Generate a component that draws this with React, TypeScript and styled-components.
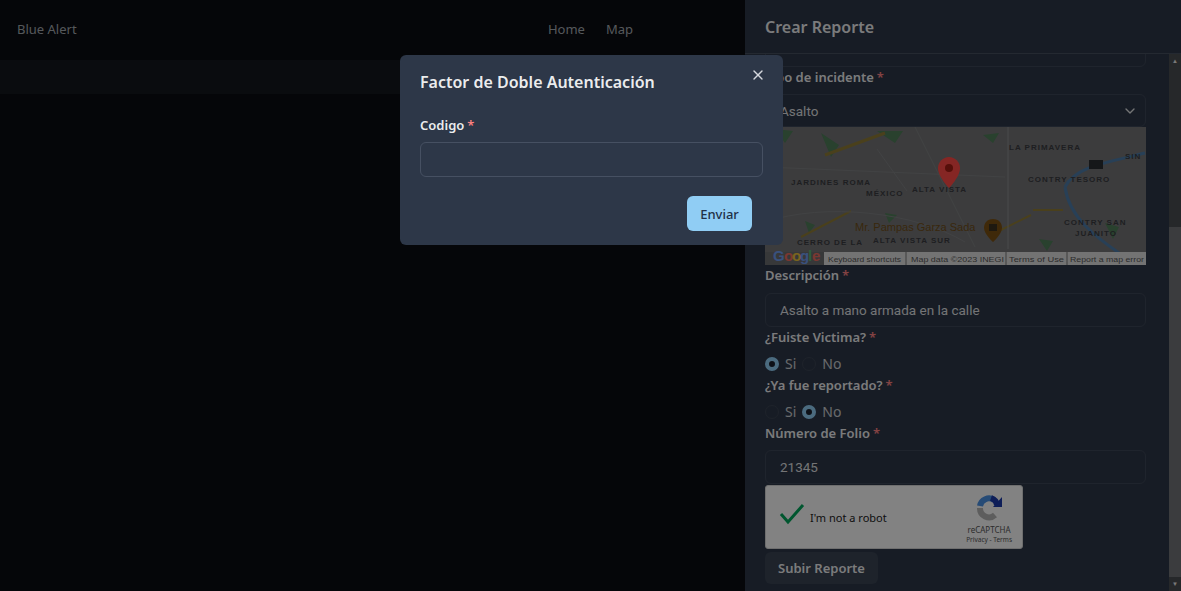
import React from 'react';
import styled, { createGlobalStyle } from 'styled-components';
import { X, ChevronDown } from 'lucide-react';

const GlobalStyle = createGlobalStyle`
  html, body {
    margin: 0;
    height: 100%;
    overflow: hidden;
    background: #0a0c12;
    font-family: "Noto Sans", "Open Sans", sans-serif;
  }
`;

const Screen = styled.div`
  position: relative;
  width: 1181px;
  height: 591px;
  overflow: hidden;
`;

const Page = styled.div`
  display: flex;
  flex-direction: column;
  height: 100%;
`;

const Nav = styled.nav`
  height: 60px;
  flex: none;
  box-sizing: border-box;
  display: grid;
  grid-template-columns: 1fr auto 1fr;
  align-items: center;
  padding: 0 17px 3px;
  color: #a4a9af;
  font-size: 13px;
`;

const NavLinks = styled.div`
  display: flex;
  gap: 21px;
`;

const Strip = styled.div`
  height: 34px;
  flex: none;
  background: #15171d;
`;

const Dim = styled.div`
  position: absolute;
  inset: 0;
  background: rgba(0, 0, 0, 0.48);
  z-index: 3;
`;

const Drawer = styled.aside`
  position: absolute;
  top: 0;
  right: 0;
  bottom: 0;
  z-index: 2;
  width: 436px;
  display: flex;
  flex-direction: column;
  background: #2d3748;
  color: rgba(255, 255, 255, 0.92);
`;

const DrawerTitle = styled.header`
  height: 54px;
  display: flex;
  align-items: center;
  padding: 0 20px;
  font-size: 16px;
  font-weight: 600;
  box-sizing: border-box;
  border-bottom: 1px solid #46505f;
  flex: none;
`;

const DrawerBody = styled.div`
  flex: 1;
  min-height: 0;
  display: flex;
  overflow: hidden;
`;

const Form = styled.form`
  flex: 1;
  min-width: 0;
  display: flex;
  flex-direction: column;
  padding: 0 23px 0 20px;
  margin-top: -21px;
`;

const Label = styled.label<{ $gap?: number }>`
  display: block;
  height: 20px;
  line-height: 20px;
  font-size: 13px;
  font-weight: 600;
  margin-bottom: ${(p) => p.$gap ?? 7}px;
`;

const Required = styled.span`
  color: #fc8181;
  margin-left: 3px;
`;

const Field = styled.div`
  height: 34px;
  flex: none;
  box-sizing: border-box;
  display: flex;
  align-items: center;
  padding: 0 14px;
  border: 1px solid #3d4656;
  border-radius: 6px;
  font-family: Roboto, sans-serif;
  font-size: 13.5px;
  color: rgba(255, 255, 255, 0.85);
`;

const SelectField = styled(Field)`
  height: 33px;
  justify-content: space-between;
  padding-right: 7px;
`;

const RadioRow = styled.div`
  display: flex;
  align-items: center;
  height: 23px;
  font-size: 14px;
`;

const RadioOption = styled.span`
  display: flex;
  align-items: center;
  gap: 6px;
  margin-right: 6px;
  color: rgba(255, 255, 255, 0.75);
`;

const RadioDot = styled.span<{ $checked?: boolean }>`
  width: 14px;
  height: 14px;
  box-sizing: border-box;
  border-radius: 50%;
  border: ${(p) => (p.$checked ? '4px solid #90cdf4' : '1px solid #3a4352')};
  background: ${(p) => (p.$checked ? '#1a202c' : 'transparent')};
`;

const MapFrame = styled.div`
  height: 138px;
  flex: none;
  overflow: hidden;
`;

const Captcha = styled.div`
  width: 258px;
  height: 64px;
  flex: none;
  margin-top: 1px;
  box-sizing: border-box;
  border-radius: 3px;
  background: #f9f9f9;
  border: 1px solid #d3d3d3;
  display: flex;
  align-items: center;
  padding: 0 10px 0 13px;
  color: #222;
`;

const CheckBox = styled.span`
  display: flex;
  margin-bottom: 6px;
`;

const CaptchaText = styled.span`
  flex: 1;
  font-size: 11px;
  margin-left: 5px;
`;

const CaptchaBrand = styled.div`
  display: flex;
  flex-direction: column;
  align-items: center;
  gap: 0;
  padding-top: 5px;
  font-size: 8px;
  line-height: 10px;
  color: #555;

  svg {
    margin-bottom: 3px;
  }
`;

const CaptchaLegal = styled.span`
  font-size: 6.5px;
`;

const SubmitButton = styled.button`
  flex: none;
  width: 113px;
  height: 32px;
  margin-top: 3px;
  border: none;
  border-radius: 6px;
  background: #3a4454;
  color: rgba(255, 255, 255, 0.92);
  font: 600 13px "Noto Sans", sans-serif;
`;

const Scrollbar = styled.div`
  width: 12px;
  flex: none;
  display: flex;
  flex-direction: column;
  align-items: center;
  background: #4a4d52;
  color: #e8e8e8;
`;

const ScrollArrow = styled.div`
  height: 14px;
  flex: none;
  display: flex;
  align-items: center;
  justify-content: center;
  font-size: 6px;
`;

const ScrollTrack = styled.div`
  flex: 1;
  width: 100%;
`;

const ScrollThumb = styled.div`
  width: 100%;
  height: 350px;
  flex: none;
  background: #727478;
`;

const Modal = styled.section`
  position: absolute;
  z-index: 4;
  left: 400px;
  top: 55px;
  width: 383px;
  height: 190px;
  box-sizing: border-box;
  background: #2d3748;
  border-radius: 6px;
  padding: 14px 20px 0;
  color: rgba(255, 255, 255, 0.92);
  display: flex;
  flex-direction: column;
`;

const ModalTitle = styled.h2`
  margin: 0;
  height: 26px;
  line-height: 26px;
  font-size: 16px;
  font-weight: 600;
`;

const ModalLabel = styled(Label)`
  margin: 20px 0 7px;
`;

const CloseIcon = styled(X)`
  position: absolute;
  top: 12px;
  right: 17px;
  color: #d5d8dd;
`;

const ModalInput = styled.input`
  height: 35px;
  flex: none;
  box-sizing: border-box;
  border: 1px solid #465062;
  border-radius: 6px;
  background: transparent;
`;

const ModalFooter = styled.div`
  display: flex;
  justify-content: flex-end;
  margin: 19px 11px 0 0;
`;

const SendButton = styled.button`
  width: 65px;
  height: 35px;
  border: none;
  border-radius: 6px;
  background: #90cdf4;
  color: #1f3048;
  font: 500 13px "Noto Sans", sans-serif;
`;

const GoogleLogo = () => (
  <g fontFamily="Liberation Sans, sans-serif" fontSize="15" fontWeight="700">
    <text x="8" y="134" fill="#6d9bf0">G</text>
    <text x="19" y="134" fill="#ea6a5e">o</text>
    <text x="27" y="134" fill="#e8c03a">o</text>
    <text x="35" y="134" fill="#6d9bf0">g</text>
    <text x="43" y="134" fill="#58b070">l</text>
    <text x="47" y="134" fill="#ea6a5e">e</text>
  </g>
);

const StaticMap = () => {
  const labels: [string, number, number][] = [
    ['LA PRIMAVERA', 244, 23],
    ['JARDINES ROMA', 26, 58],
    ['MÉXICO', 101, 69],
    ['ALTA VISTA', 147, 65],
    ['CONTRY TESORO', 263, 55],
    ['CONTRY SAN', 299, 98],
    ['JUANITO', 310, 109],
    ['CERRO DE LA', 32, 118],
    ['ALTA VISTA SUR', 108, 116],
    ['SIN', 360, 32],
  ];
  const attributions: [string, number, number][] = [
    ['Keyboard shortcuts', 63, 73],
    ['Map data ©2023 INEGI', 146, 93],
    ['Terms of Use', 244, 55],
    ['Report a map error', 305, 74],
  ];
  return (
    <svg width="381" height="138" viewBox="0 0 381 138">
      <rect width="381" height="138" fill="#737476" />
      <path d="M10 2l18 2-8 12zM56 6l10 24 8-12zM112 4l18 12 8-12zM218 8l16-2-6 10zM40 94l10 4-6 8zM120 86l12 2-8 8zM274 112l14 2-6 10zM340 96l14 4-6 12z" fill="#4f7d58" />
      <path d="M60 28L120 6" stroke="#8f7c36" strokeWidth="3" fill="none" />
      <path d="M36 110L86 84M268 83h30M230 106l36-18" stroke="#8f7c36" strokeWidth="2" fill="none" />
      <path d="M300 60c4 30 30 50 60 70M300 60c10-20 40-24 80-34" stroke="#4d7ba8" strokeWidth="3" fill="none" />
      <path d="M243 0v122" stroke="#8d8e90" strokeWidth="1" fill="none" />
      <path d="M112 22l30 42M150 0l60 120M0 40l240 10M0 95c60-20 150-10 200 20" stroke="#7f8082" strokeWidth="1" fill="none" />
      <g fontFamily="Liberation Sans, sans-serif" fontSize="8" fontWeight="700" fill="#3a3b40" letterSpacing="1">
        {labels.map(([text, x, y]) => (
          <text key={text} x={x} y={y}>{text}</text>
        ))}
      </g>
      <text x="90" y="104" fontFamily="Liberation Sans, sans-serif" fontSize="11" fill="#6e4c18">Mr. Pampas Garza Sada</text>
      <path d="M228 92c-6 0-9 4-9 9 0 6 9 14 9 14s9-8 9-14c0-5-3-9-9-9z" fill="#7a5012" />
      <rect x="224" y="97" width="8" height="7" fill="#3a3020" />
      <path d="M184 30c-6 0-11 5-11 11 0 9 11 20 11 20s11-11 11-20c0-6-5-11-11-11z" fill="#ff4a45" />
      <circle cx="184" cy="41" r="4" fill="#a51d14" />
      <rect x="324" y="33" width="14" height="9" fill="#2a2c30" />
      <rect x="0" y="125" width="60" height="13" fill="#6a6b6d" />
      <rect x="59" y="125" width="322" height="13" fill="#dcdcdc" />
      <g fontFamily="Liberation Sans, sans-serif" fontSize="8" fill="#555">
        {attributions.map(([text, x, width]) => (
          <text key={text} x={x} y="135" textLength={width} lengthAdjust="spacingAndGlyphs">{text}</text>
        ))}
      </g>
      <path d="M141 125v13M241 125v13M302 125v13" stroke="#777" strokeWidth="1" />
      <GoogleLogo />
    </svg>
  );
};

const RecaptchaMark = () => (
  <svg width="28" height="28" viewBox="0 0 28 28">
    <path d="M5 12a9 9 0 0 1 14-6" stroke="#4a90e2" strokeWidth="6" fill="none" />
    <path d="M16 4a9 9 0 0 1 6 7" stroke="#1c3aa9" strokeWidth="6" fill="none" />
    <path d="M18 13h9V3z" fill="#1c3aa9" />
    <path d="M5 14a9 9 0 0 0 15 7" stroke="#b3b3b3" strokeWidth="6" fill="none" />
  </svg>
);

const CheckMark = () => (
  <CheckBox>
    <svg width="26" height="22" viewBox="0 0 26 22">
      <path d="M2 11l7 8L24 2" stroke="#00a65a" strokeWidth="3" fill="none" />
    </svg>
  </CheckBox>
);

const YesNo = ({ checked }: { checked: 'si' | 'no' }) => (
  <RadioRow>
    <RadioOption>
      <RadioDot $checked={checked === 'si'} />
      Si
    </RadioOption>
    <RadioOption>
      <RadioDot $checked={checked === 'no'} />
      No
    </RadioOption>
  </RadioRow>
);

const Asterisk = () => <Required>*</Required>;

const App = () => {
  return (
    <Screen>
      <GlobalStyle />
      <Page>
        <Nav>
          <span>Blue Alert</span>
          <NavLinks>
            <span>Home</span>
            <span>Map</span>
          </NavLinks>
        </Nav>
        <Strip />
      </Page>
      <Drawer>
        <DrawerTitle>Crear Reporte</DrawerTitle>
        <DrawerBody>
          <Form>
            <Field />
            <Label>Tipo de incidente<Asterisk /></Label>
            <SelectField>
              Asalto
              <ChevronDown size={16} />
            </SelectField>
            <MapFrame>
              <StaticMap />
            </MapFrame>
            <Label $gap={8}>Descripción<Asterisk /></Label>
            <Field>Asalto a mano armada en la calle</Field>
            <Label $gap={5}>¿Fuiste Victima?<Asterisk /></Label>
            <YesNo checked="si" />
            <Label $gap={5}>¿Ya fue reportado?<Asterisk /></Label>
            <YesNo checked="no" />
            <Label>Número de Folio<Asterisk /></Label>
            <Field>21345</Field>
            <Captcha>
              <CheckMark />
              <CaptchaText>I'm not a robot</CaptchaText>
              <CaptchaBrand>
                <RecaptchaMark />
                reCAPTCHA
                <CaptchaLegal>Privacy - Terms</CaptchaLegal>
              </CaptchaBrand>
            </Captcha>
            <SubmitButton type="button">Subir Reporte</SubmitButton>
          </Form>
          <Scrollbar>
            <ScrollArrow>▲</ScrollArrow>
            <ScrollTrack />
            <ScrollThumb />
            <ScrollArrow>▼</ScrollArrow>
          </Scrollbar>
        </DrawerBody>
      </Drawer>
      <Dim />
      <Modal>
        <ModalTitle>Factor de Doble Autenticación</ModalTitle>
        <CloseIcon size={16} />
        <ModalLabel>Codigo<Asterisk /></ModalLabel>
        <ModalInput />
        <ModalFooter>
          <SendButton type="button">Enviar</SendButton>
        </ModalFooter>
      </Modal>
    </Screen>
  );
};

export default App;
